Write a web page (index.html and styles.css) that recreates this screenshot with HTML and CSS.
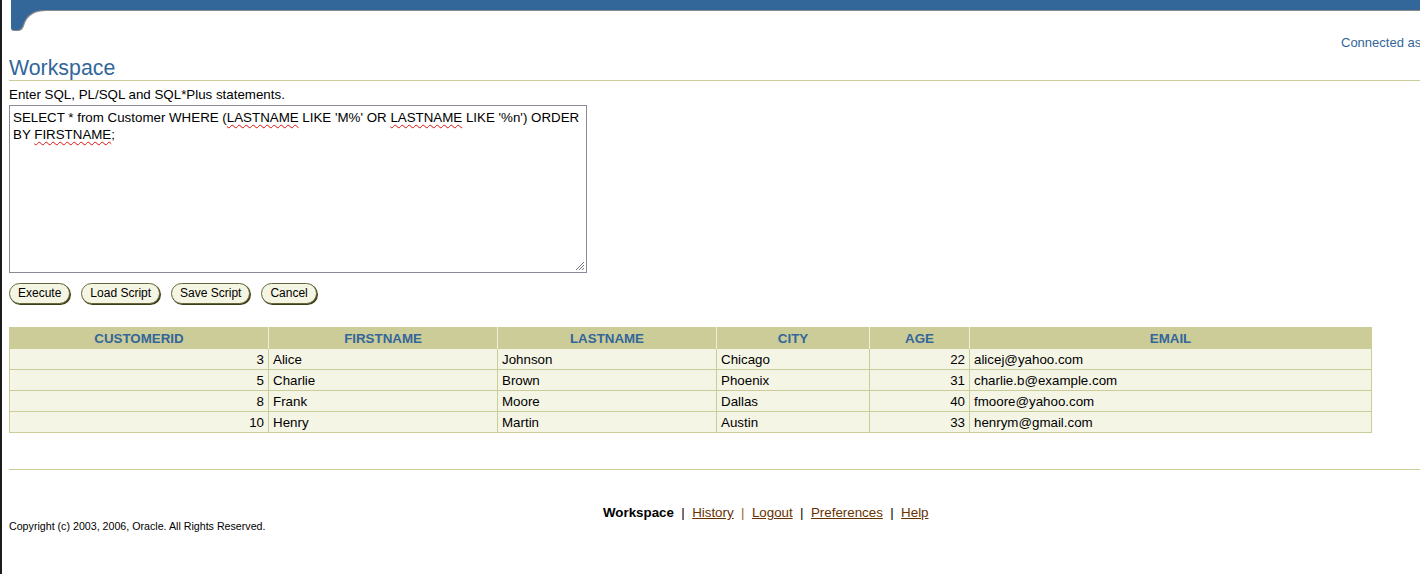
FILE: index.html
```html
<!DOCTYPE html>
<html>
<head>
<meta charset="utf-8">
<title>Workspace</title>
<link rel="stylesheet" href="styles.css">
</head>
<body>
<div class="page">
  <svg class="banner" width="1411" height="32" viewBox="0 0 1411 32">
    <path d="M2,0 H1411 V11 H38 C26,11 18,15 15,26 C14,29 12,31 9,31 H5 C3,31 2,30 2,28 Z" fill="#8a8a8a"/>
    <path d="M2,0 H1411 V10 H37 C25,10 17,14 14,25 C13,28 11,30 8,30 H5 C3,30 2,29 2,27 Z" fill="#336699"/>
  </svg>
  <div class="connected">Connected as CUSTOMERDB</div>
  <h1 class="title">Workspace</h1>
  <div class="intro">Enter SQL, PL/SQL and SQL*Plus statements.</div>
  <div class="editor">SELECT * from Customer WHERE (<span class="sp">LASTNAME</span> LIKE 'M%' OR <span class="sp">LASTNAME</span> LIKE '%n') ORDER BY <span class="sp">FIRSTNAME</span>;<svg class="grip" width="10" height="10" viewBox="0 0 10 10"><path d="M9,1 L1,9 M9,4 L4,9 M9,7 L7,9" stroke="#777" stroke-width="1"/></svg></div>
  <div class="buttons">
    <button class="btn">Execute</button>
    <button class="btn">Load Script</button>
    <button class="btn">Save Script</button>
    <button class="btn">Cancel</button>
  </div>
  <table class="results">
    <colgroup>
      <col style="width:259px"><col style="width:229px"><col style="width:219px"><col style="width:153px"><col style="width:100px"><col>
    </colgroup>
    <thead>
      <tr><th>CUSTOMERID</th><th>FIRSTNAME</th><th>LASTNAME</th><th>CITY</th><th>AGE</th><th>EMAIL</th></tr>
    </thead>
    <tbody>
      <tr><td class="num">3</td><td>Alice</td><td>Johnson</td><td>Chicago</td><td class="num">22</td><td>alicej@yahoo.com</td></tr>
      <tr><td class="num">5</td><td>Charlie</td><td>Brown</td><td>Phoenix</td><td class="num">31</td><td>charlie.b@example.com</td></tr>
      <tr><td class="num">8</td><td>Frank</td><td>Moore</td><td>Dallas</td><td class="num">40</td><td>fmoore@yahoo.com</td></tr>
      <tr><td class="num">10</td><td>Henry</td><td>Martin</td><td>Austin</td><td class="num">33</td><td>henrym@gmail.com</td></tr>
    </tbody>
  </table>
  <div class="rule"></div>
  <div class="footer">
    <div class="nav"><b>Workspace</b>&nbsp;&nbsp;|&nbsp;&nbsp;<a href="#">History</a>&nbsp;&nbsp;<span class="sep">|</span>&nbsp;&nbsp;<a href="#">Logout</a>&nbsp;&nbsp;|&nbsp;&nbsp;<a href="#">Preferences</a>&nbsp;&nbsp;|&nbsp;&nbsp;<a href="#">Help</a></div>
    <div class="copy">Copyright (c) 2003, 2006, Oracle. All Rights Reserved.</div>
  </div>
</div>
</body>
</html>
```

FILE: styles.css
```css
html, body {
  margin: 0;
  padding: 0;
  background: #ffffff;
  overflow: hidden;
}
body {
  font-family: "Liberation Sans", Arial, sans-serif;
  font-size: 13.33px;
  color: #000;
}
.page {
  border-left: 2px solid #1c1c1c;
  padding-left: 7px;
  min-height: 574px;
  box-sizing: border-box;
}
.banner {
  display: block;
}
.connected {
  margin-top: 3px;
  line-height: 16px;
  padding-left: 1332px;
  white-space: nowrap;
  color: #336699;
  font-size: 13px;
}
.title {
  margin: 3px 0 0 0;
  font-size: 21.33px;
  font-weight: normal;
  line-height: 24px;
  padding-top: 2px;
  color: #336699;
  border-bottom: 1px solid #cccc99;
}
.intro {
  margin-top: 6px;
  line-height: 16px;
}
.editor {
  position: relative;
  margin-top: 2px;
  width: 578px;
  height: 168px;
  box-sizing: border-box;
  border: 1px solid #8a8a98;
  padding: 3px 3px;
  line-height: 17px;
  font-size: 13.33px;
}
.sp {
  text-decoration: underline wavy #e01010;
  text-decoration-thickness: 1px;
  text-underline-offset: 2px;
}
.grip {
  position: absolute;
  right: 1px;
  bottom: 1px;
}
.buttons {
  display: flex;
  gap: 11px;
  margin-top: 10px;
}
.btn {
  height: 21px;
  box-sizing: border-box;
  margin: 0;
  padding: 0 8px;
  border: 1px solid #66663a;
  border-radius: 11px;
  background: #f5f5e3;
  box-shadow: 1px 1px 0 #3d3d1a;
  font-family: "Liberation Sans", Arial, sans-serif;
  font-size: 12px;
  color: #000;
  line-height: 19px;
}
.results {
  margin-top: 23px;
  width: 1363px;
  border-collapse: collapse;
  table-layout: fixed;
  border: 1px solid #cccc99;
}
.results th {
  background: #cccc99;
  color: #336699;
  font-weight: bold;
  font-size: 13.33px;
  height: 21px;
  padding: 0 4px;
  text-align: center;
  border-right: 1px solid #eeeedd;
  box-sizing: border-box;
}
.results th:last-child {
  border-right: none;
}
.results td {
  background: #f5f5e6;
  height: 21px;
  padding: 1px 4px 0 4px;
  border: 1px solid #cccc99;
  box-sizing: border-box;
  line-height: 18px;
  white-space: nowrap;
  font-size: 13.33px;
}
.results td.num {
  text-align: right;
}
.rule {
  margin-top: 36px;
  border-top: 1px solid #cccc99;
}
.footer {
  margin-top: 35px;
}
.nav {
  padding-left: 594px;
  line-height: 16px;
  font-size: 13.33px;
  white-space: nowrap;
}
.nav b {
  color: #000;
}
.nav a {
  color: #663300;
  text-decoration: underline;
}
.nav .sep {
  color: #a8651a;
}
.copy {
  font-size: 10.67px;
  line-height: 12px;
  margin-top: -1px;
}
```
